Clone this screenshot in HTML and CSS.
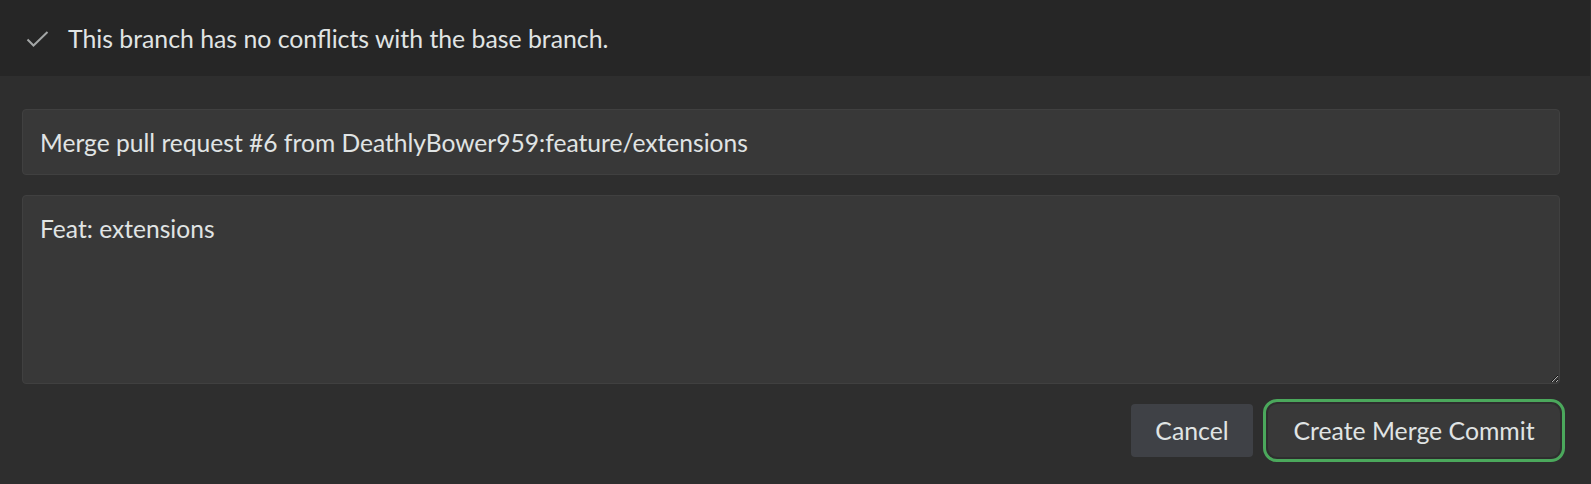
FILE: index.html
```html
<!DOCTYPE html>
<html lang="en">
<head>
<meta charset="utf-8">
<title>Merge</title>
<link rel="stylesheet" href="styles.css">
</head>
<body>
  <div class="status">
    <svg class="check" width="23" height="16" viewBox="0 0 23 16" aria-hidden="true">
      <path d="M1.5 8.5 L7.5 14.5 L21.5 1" fill="none" stroke="#a3a6a6" stroke-width="2"/>
    </svg>
    <span class="status-text">This branch has no conflicts with the base branch.</span>
  </div>
  <div class="form">
    <input class="title-input" type="text" value="Merge pull request #6 from DeathlyBower959:feature/extensions">
    <textarea class="body-input">Feat: extensions</textarea>
    <div class="actions">
      <button class="btn btn-cancel">Cancel</button>
      <button class="btn btn-primary">Create Merge Commit</button>
    </div>
  </div>
</body>
</html>
```
FILE: styles.css
```css
html, body {
  margin: 0;
  padding: 0;
  background: #2e2e2e;
  color-scheme: dark;
}
body {
  font-family: Lato, "Noto Sans", sans-serif;
  color: #e0e4e4;
  min-height: 484px;
}
.status {
  height: 76px;
  background: #262626;
  display: flex;
  align-items: center;
  padding-left: 26px;
  gap: 19px;
  box-sizing: border-box;
  margin-right: 1px;
}
.check {
  flex: none;
  margin-top: 1px;
}
.status-text {
  font-size: 24.8px;
}
.form {
  padding: 33px 31px 26px 22px;
  display: flex;
  flex-direction: column;
}
.title-input,
.body-input {
  font-family: inherit;
  font-size: 24.6px;
  color: #e0e4e4;
  background: #383838;
  border: 1px solid #404040;
  border-radius: 4px;
  padding: 0 17px;
  box-sizing: border-box;
  outline: none;
  width: 100%;
  margin: 0;
}
.title-input {
  height: 66px;
}
.body-input {
  margin-top: 20px;
  height: 189px;
  padding-top: 18px;
  resize: vertical;
  line-height: 30px;
  display: block;
}
.actions {
  display: flex;
  justify-content: flex-end;
  gap: 15px;
  margin-top: 20px;
}
.btn {
  font-family: inherit;
  font-size: 24.8px;
  color: #e0e4e4;
  height: 53px;
  border: none;
  border-radius: 4px;
  padding: 0;
  cursor: pointer;
}
.btn-cancel {
  background: #3f4146;
  width: 122px;
}
.btn-primary {
  background: #393939;
  width: 292px;
  outline: 3px solid #4ba85c;
  outline-offset: 2px;
  border-radius: 9px;
}
```
